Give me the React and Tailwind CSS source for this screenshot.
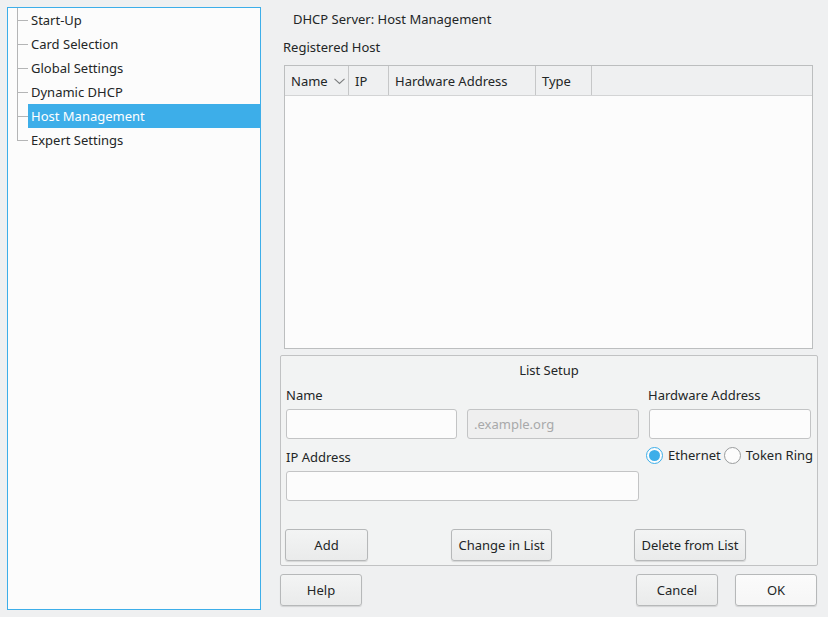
import React from 'react'

const pages = ['Start-Up', 'Card Selection', 'Global Settings', 'Dynamic DHCP', 'Host Management', 'Expert Settings']

function TreeRow({ label, selected, last }) {
  return (
    <div className="flex h-[24px]">
      <div className="relative w-[20px] shrink-0">
        <div className={`absolute left-[9px] top-0 w-px bg-[#b4b5b6] ${last ? 'h-[12px]' : 'h-full'}`} />
        <div className="absolute left-[9px] top-[12px] h-px w-[11px] bg-[#b4b5b6]" />
      </div>
      <div
        className={`flex flex-1 items-center pl-[3px] pt-[2px] ${selected ? 'bg-[#3daee9] text-white' : 'text-[#232627]'}`}
      >
        {label}
      </div>
    </div>
  )
}

function Button({ children, className = '' }) {
  return (
    <button
      className={`flex h-[32px] items-center justify-center rounded-[3px] border border-[#b6b8b9] bg-gradient-to-b pt-[2px] text-[#232627] shadow-[0_1px_1px_rgba(0,0,0,0.12)] ${className}`}
    >
      {children}
    </button>
  )
}

function Input({ className = '', placeholder, disabled }) {
  return (
    <div
      className={`flex h-[30px] items-center rounded-[3px] border border-[#c3c4c5] px-[6px] pt-[2px] ${
        disabled ? 'bg-[#efefef] text-[#a8a9aa]' : 'bg-[#fcfcfc]'
      } ${className}`}
    >
      {placeholder}
    </div>
  )
}

function Radio({ checked, label }) {
  return (
    <div className="flex shrink-0 items-center gap-[5px] whitespace-nowrap">
      <div
        className={`flex h-[17px] w-[17px] items-center justify-center rounded-full border bg-[#fcfcfc] ${
          checked ? 'border-[#3daee9]' : 'border-[#9a9c9d]'
        }`}
      >
        {checked && <div className="h-[11px] w-[11px] rounded-full bg-[#3daee9]" />}
      </div>
      <span className="pt-[1px]">{label}</span>
    </div>
  )
}

export default function App() {
  return (
    <div
      className="flex h-[617px] w-[828px] bg-[#eff0f1] text-[13px] text-[#232627]"
      style={{ fontFamily: '"Noto Sans", "Open Sans", sans-serif' }}
    >
      <div className="ml-[7px] mt-[7px] h-[603px] w-[254px] border border-[#3daee9] bg-[#fcfcfc]">
        {pages.map((p, i) => (
          <TreeRow key={p} label={p} selected={p === 'Host Management'} last={i === pages.length - 1} />
        ))}
      </div>

      <div className="ml-[19px] flex w-[538px] flex-col">
        <div className="flex h-[38px] items-center pl-[13px] pt-[2px]">DHCP Server: Host Management</div>
        <div className="h-[18px] pl-[3px] leading-[18px]">Registered Host</div>

        <div className="ml-[4px] mt-[9px] flex h-[284px] w-[529px] flex-col border border-[#bcbebf] bg-[#fcfcfc]">
          <div className="flex h-[30px] border-b border-[#d3d4d5] bg-[#eff0f1]">
            <div className="flex w-[64px] items-center border-r border-[#c6c7c8] pl-[6px] pt-[2px]">
              <span>Name</span>
              <svg width="11" height="7" viewBox="0 0 11 7" className="ml-[6px] -mt-[1px]">
                <polyline points="0.5,0.8 5.5,5.5 10.5,0.8" fill="none" stroke="#7b7d7e" strokeWidth="1.1" />
              </svg>
            </div>
            <div className="flex w-[40px] items-center border-r border-[#c6c7c8] pl-[6px] pt-[2px]">IP</div>
            <div className="flex w-[147px] items-center border-r border-[#c6c7c8] pl-[6px] pt-[2px]">Hardware Address</div>
            <div className="flex w-[56px] items-center border-r border-[#c6c7c8] pl-[6px] pt-[2px]">Type</div>
          </div>
        </div>

        <div className="mt-[6px] flex h-[211px] flex-col rounded-[2px] border border-[#c1c2c3] bg-[#f2f3f3] px-[5px]">
          <div className="flex h-[27px] items-center justify-center pt-[2px]">List Setup</div>
          <div className="flex h-[26px] items-center">
            <div className="w-[362px]">Name</div>
            <div>Hardware Address</div>
          </div>
          <div className="flex h-[30px] gap-[10px]">
            <Input className="w-[171px]" />
            <Input className="w-[172px]" placeholder=".example.org" disabled />
            <Input className="w-[162px]" />
          </div>
          <div className="flex h-[32px] items-center">
            <div className="w-[360px] shrink-0 pt-[6px]">IP Address</div>
            <Radio checked label="Ethernet" />
            <div className="ml-[3px]">
              <Radio label="Token Ring" />
            </div>
          </div>
          <div className="flex h-[30px]">
            <Input className="w-[353px]" />
          </div>
          <div className="mt-[28px] flex -ml-px">
            <Button className="w-[83px] from-[#f3f4f4] to-[#eaebeb]">Add</Button>
            <Button className="ml-[83px] w-[101px] from-[#f3f4f4] to-[#eaebeb]">Change in List</Button>
            <Button className="ml-[82px] w-[112px] from-[#f3f4f4] to-[#eaebeb]">Delete from List</Button>
          </div>
        </div>

        <div className="mt-[8px] flex">
          <Button className="w-[82px] from-[#f3f4f4] to-[#eaebeb]">Help</Button>
          <Button className="ml-auto w-[82px] from-[#f3f4f4] to-[#eaebeb]">Cancel</Button>
          <Button className="ml-[17px] mr-px w-[82px] from-[#fbfbfb] to-[#f6f6f6]">OK</Button>
        </div>
      </div>
    </div>
  )
}
